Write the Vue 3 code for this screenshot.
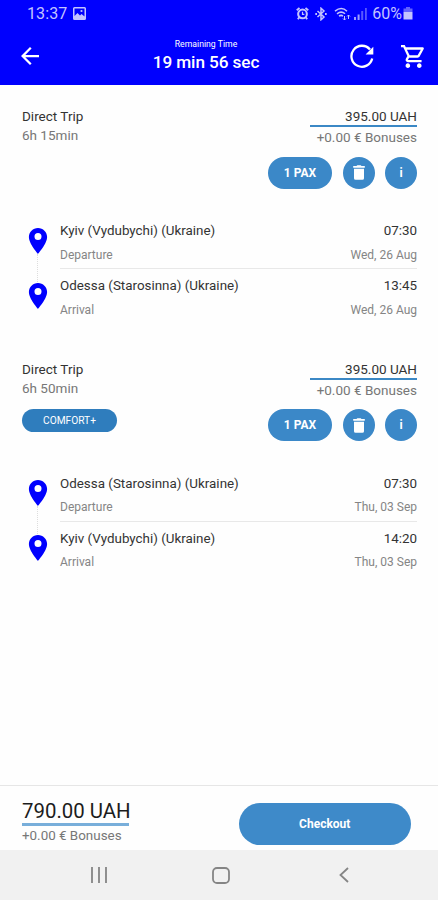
<template>
  <div class="screen">
    <header class="header">
      <div class="status-bar">
        <span class="clock">13:37</span>
        <svg class="s-pic" viewBox="0 0 13 13">
          <path d="M1.5 0h10A1.5 1.5 0 0 1 13 1.5v10a1.5 1.5 0 0 1-1.5 1.5h-10A1.5 1.5 0 0 1 0 11.500v-10A1.5 1.500 0 0 1 1.500 0zM1.500 1.500v7.500l3-3 2.500 2.500 1.500-1.500 3 2.500V1.500z" fill="currentColor" fill-rule="evenodd" />
          <circle cx="8.500" cy="4" r="1.100" fill="currentColor" />
        </svg>
        <div class="status-right">
          <svg class="s-alarm" viewBox="0 0 14 14" fill="none" stroke="currentColor">
            <circle cx="7" cy="7.500" r="4.700" stroke-width="2.200" />
            <path d="M7 5v3h2" stroke-width="1.300" />
            <path d="M.8 3.500L3.800 1M13.200 3.500L10.200 1M3.500 11L2 13.300M10.500 11L12 13.300" stroke-width="2" />
          </svg>
          <svg class="s-bt" viewBox="0 0 12 14" fill="none" stroke="currentColor" stroke-width="1.500">
            <path d="M2.500 4l6.500 6-3 2.800V1.200L9 4 2.500 10" />
            <path d="M.3 7h1.700M10 7h1.700" stroke-width="1.800" />
          </svg>
          <svg class="s-wifi" viewBox="0 0 17 14" fill="none" stroke="currentColor" stroke-width="1.500">
            <path d="M1 4.200c4-3.300 8.500-3.300 12 0M3 6.800c2.800-2.200 5.500-2.200 8 0M5 9.200c1.500-1.100 2.800-1.100 4 0" />
            <path d="M10.500 9v4M9 11.500l1.500 1.500L12 11.500M14.500 12V8M13 9.500L14.500 8 16 9.500" stroke-width="1" />
          </svg>
          <svg class="s-signal" viewBox="0 0 13 13" fill="currentColor">
            <path d="M0 10h2v3H0zM3.600 7.500h2V13h-2z" opacity=".8" />
            <path d="M7.200 4h2v9h-2zM11 1h1.800v12H11z" opacity=".45" />
          </svg>
          <span class="percent">60%</span>
          <svg class="s-battery" viewBox="0 0 10 13" fill="currentColor">
            <path d="M3 0h4v1.500h2.500V5H.5V1.500H3z" opacity=".5" />
            <path d="M.5 5h9v7.500h-9z" />
          </svg>
        </div>
      </div>
      <div class="app-bar">
        <svg class="back" viewBox="4 4 16 16"><path d="M20 11H7.830l5.590-5.590L12 4l-8 8 8 8 1.410-1.410L7.830 13H20v-2z" fill="currentColor" /></svg>
        <div class="timer">
          <span class="timer-label">Remaining Time</span>
          <span class="timer-value">19 min 56 sec</span>
        </div>
        <svg class="refresh" viewBox="0 0 24 24">
          <path d="M20 5.500A10.500 10.500 0 1 0 22.200 14.500" fill="none" stroke="currentColor" stroke-width="2.300" />
          <path d="M23.300 2.800v7.700h-7.700z" fill="currentColor" />
        </svg>
        <svg class="cart" viewBox="1 2 21 20"><path d="M15.550 13c.75 0 1.410-.41 1.750-1.030l3.580-6.490c.37-.66-.11-1.480-.87-1.480H5.210l-.94-2H1v2h2l3.600 7.590-1.350 2.440C4.520 15.370 5.480 17 7 17h12v-2H7l1.100-2h7.450zM6.160 6h12.150l-2.760 5H8.530L6.160 6zM7 18c-1.100 0-1.990.9-1.990 2S5.900 22 7 22s2-.9 2-2-.9-2-2-2zm10 0c-1.100 0-1.990.9-1.990 2s.89 2 1.990 2 2-.9 2-2-.9-2-2-2z" fill="currentColor" /></svg>
      </div>
    </header>

    <main class="trips">
      <section v-for="(trip, i) in trips" :key="i" class="trip">
        <div class="trip-head">
          <div class="trip-info">
            <span class="trip-title">Direct Trip</span>
            <span class="duration">{{ trip.duration }}</span>
            <span v-if="trip.tag" class="tag">{{ trip.tag }}</span>
          </div>
          <div class="trip-side">
            <span class="price">395.00 UAH</span>
            <span class="bonus">+0.00 € Bonuses</span>
            <div class="actions">
              <button class="btn pax">1 PAX</button>
              <button class="btn round">
                <svg class="trash" viewBox="0 0 12 15" fill="currentColor"><path d="M.2 1h3.300l.8-.8h3.400l.8.8h3.300v1.700H.2zM1 3.700h10v9.500q0 1.600-1.600 1.600H2.600Q1 14.800 1 13.200z" /></svg>
              </button>
              <button class="btn round">i</button>
            </div>
          </div>
        </div>
        <div class="route">
          <div v-for="stop in trip.stops" :key="stop.kind" class="stop">
            <div class="marker">
              <svg class="pin" viewBox="5 2 14 20"><path d="M12 2C8.130 2 5 5.130 5 9c0 5.250 7 13 7 13s7-7.750 7-13c0-3.870-3.130-7-7-7zm0 9.300a2.700 2.700 0 0 1 0-5.400 2.700 2.700 0 0 1 0 5.400z" fill="currentColor" /></svg>
            </div>
            <div class="stop-body">
              <div class="line main"><span>{{ stop.place }}</span><span>{{ stop.time }}</span></div>
              <div class="line sub"><span>{{ stop.kind }}</span><span>{{ stop.date }}</span></div>
            </div>
          </div>
        </div>
      </section>
    </main>

    <footer class="footer">
      <div class="total">
        <span class="total-price">790.00 UAH</span>
        <span class="total-bonus">+0.00 € Bonuses</span>
      </div>
      <button class="checkout">Checkout</button>
    </footer>

    <nav class="nav-bar">
      <svg class="n-recent" viewBox="0 0 16 16"><path d="M1 0v16M8 0v16M15 0v16" /></svg>
      <svg class="n-home" viewBox="0 0 18 17"><rect x="1" y="1" width="16" height="15" rx="4" /></svg>
      <svg class="n-back" viewBox="0 0 10 16"><path d="M9 1L1.500 8 9 15" /></svg>
    </nav>
  </div>
</template>

<script setup>
import { ref } from 'vue'

const kyiv = 'Kyiv (Vydubychi) (Ukraine)'
const odessa = 'Odessa (Starosinna) (Ukraine)'

const trips = ref([
  {
    duration: '6h 15min',
    stops: [
      { kind: 'Departure', place: kyiv, time: '07:30', date: 'Wed, 26 Aug' },
      { kind: 'Arrival', place: odessa, time: '13:45', date: 'Wed, 26 Aug' },
    ],
  },
  {
    duration: '6h 50min',
    tag: 'COMFORT+',
    stops: [
      { kind: 'Departure', place: odessa, time: '07:30', date: 'Thu, 03 Sep' },
      { kind: 'Arrival', place: kyiv, time: '14:20', date: 'Thu, 03 Sep' },
    ],
  },
])
</script>

<style>
body { margin: 0; background: #fff; }
</style>

<style scoped>
.screen {
  width: 438px;
  height: 900px;
  display: flex;
  flex-direction: column;
  overflow: hidden;
  background: #fefefe;
  color: #333;
  font-family: Roboto, "Liberation Sans", sans-serif;
}
span { white-space: nowrap; }
svg { display: block; flex-shrink: 0; }
button { border: none; padding: 0; font-family: inherit; color: #fff; }

/* header */
.header { height: 85px; flex-shrink: 0; background: #0000fe; color: #fff; }
.status-bar {
  height: 27px;
  display: flex;
  align-items: center;
  padding: 0 25px 0 27px;
  color: #c3c3ff;
}
.clock { font-size: 16px; line-height: 27px; letter-spacing: 0.1px; }
.s-pic { width: 13px; height: 13px; margin-left: 6px; }
.status-right { display: flex; align-items: center; margin-left: auto; }
.s-alarm { width: 13px; height: 13px; }
.s-bt { width: 12px; height: 14px; margin-left: 6px; }
.s-wifi { width: 17px; height: 14px; margin-left: 7px; }
.s-signal { width: 13px; height: 13px; margin-left: 3px; }
.percent { font-size: 16px; line-height: 27px; margin-left: 5px; }
.s-battery { width: 10px; height: 13px; margin-left: 1px; }
.app-bar {
  height: 58px;
  display: grid;
  grid-template-columns: 85px 1fr 51px 37px;
  align-items: center;
}
.back { width: 18px; height: 18px; margin-left: 21px; }
.timer { display: flex; flex-direction: column; align-items: center; padding: 3px 23px 0 0; }
.timer-label { font-size: 8.700px; line-height: 9px; }
.timer-value { font-size: 17.200px; line-height: 26px; font-weight: 500; letter-spacing: -0.1px; }
.refresh { width: 24px; height: 24px; }
.cart { width: 24px; height: 23px; }

/* trips */
.trips { flex: 1; }
.trip { height: 252.500px; padding: 0 21px 0 22px; }
.trip-head { height: 134px; display: flex; justify-content: space-between; }
.trip-info { display: flex; flex-direction: column; align-items: flex-start; padding-top: 21px; }
.trip-title { font-size: 13.500px; line-height: 20px; }
.duration { font-size: 13.500px; line-height: 18px; color: #777; }
.tag {
  width: 95px;
  height: 23px;
  margin-top: 12px;
  border-radius: 12px;
  background: #2f7dbd;
  color: #fff;
  font-size: 10.200px;
  line-height: 23px;
  text-align: center;
}
.trip-side { display: flex; flex-direction: column; align-items: flex-end; padding-top: 21px; }
.price {
  width: 107px;
  height: 19px;
  border-bottom: 2px solid #3b88c5;
  font-size: 13.500px;
  line-height: 20px;
  text-align: right;
}
.bonus { font-size: 13.500px; line-height: 20px; color: #777; }
.actions { display: flex; gap: 10.500px; margin-top: 9.500px; }
.btn {
  height: 32px;
  display: flex;
  align-items: center;
  justify-content: center;
  border-radius: 16px;
  background: #3b88c8;
  font-size: 12px;
  font-weight: 700;
}
.pax { width: 64px; }
.round { width: 32px; }
.trash { width: 12px; height: 15px; }

.stop { display: flex; height: 55px; }
.marker { width: 38px; flex-shrink: 0; padding: 8.500px 0 0 6px; box-sizing: border-box; color: #0000fe; }
.pin { width: 20px; height: 26px; }
.stop:first-child .marker::after {
  content: "";
  display: block;
  height: 28px;
  margin-left: 9px;
  border-left: 1px dotted #ddd;
}
.stop-body { flex: 1; box-sizing: border-box; height: 50px; padding-top: 1px; }
.stop:first-child .stop-body { border-bottom: 1px solid #e8e8e8; }
.line { display: flex; justify-content: space-between; }
.main { font-size: 13.400px; line-height: 22px; }
.sub { font-size: 12px; line-height: 20px; margin-top: 2.500px; color: #858585; }

/* footer */
.footer {
  height: 65px;
  flex-shrink: 0;
  box-sizing: border-box;
  display: flex;
  justify-content: space-between;
  padding: 0 27px 0 22px;
  border-top: 1px solid #e6e6e6;
}
.total { display: flex; flex-direction: column; align-items: flex-start; padding-top: 13px; }
.total-price {
  width: 107px;
  height: 24px;
  border-bottom: 3px solid #78aeda;
  font-size: 20.400px;
  line-height: 24px;
  color: #1c1c1c;
}
.total-bonus { font-size: 13.400px; line-height: 20px; color: #777; }
.checkout {
  width: 172.500px;
  height: 42px;
  margin-top: 17px;
  border-radius: 21px;
  background: #3e8ac9;
  font-size: 12px;
  font-weight: 700;
}

.nav-bar {
  height: 50px;
  flex-shrink: 0;
  display: flex;
  align-items: center;
  background: #f1f1f1;
  fill: none;
  stroke: #858585;
  stroke-width: 1.800;
}
.n-recent { width: 16px; height: 16px; margin-left: 91px; }
.n-home { width: 18px; height: 17px; margin-left: 105px; }
.n-back { width: 10px; height: 16px; margin-left: 109px; }
</style>
